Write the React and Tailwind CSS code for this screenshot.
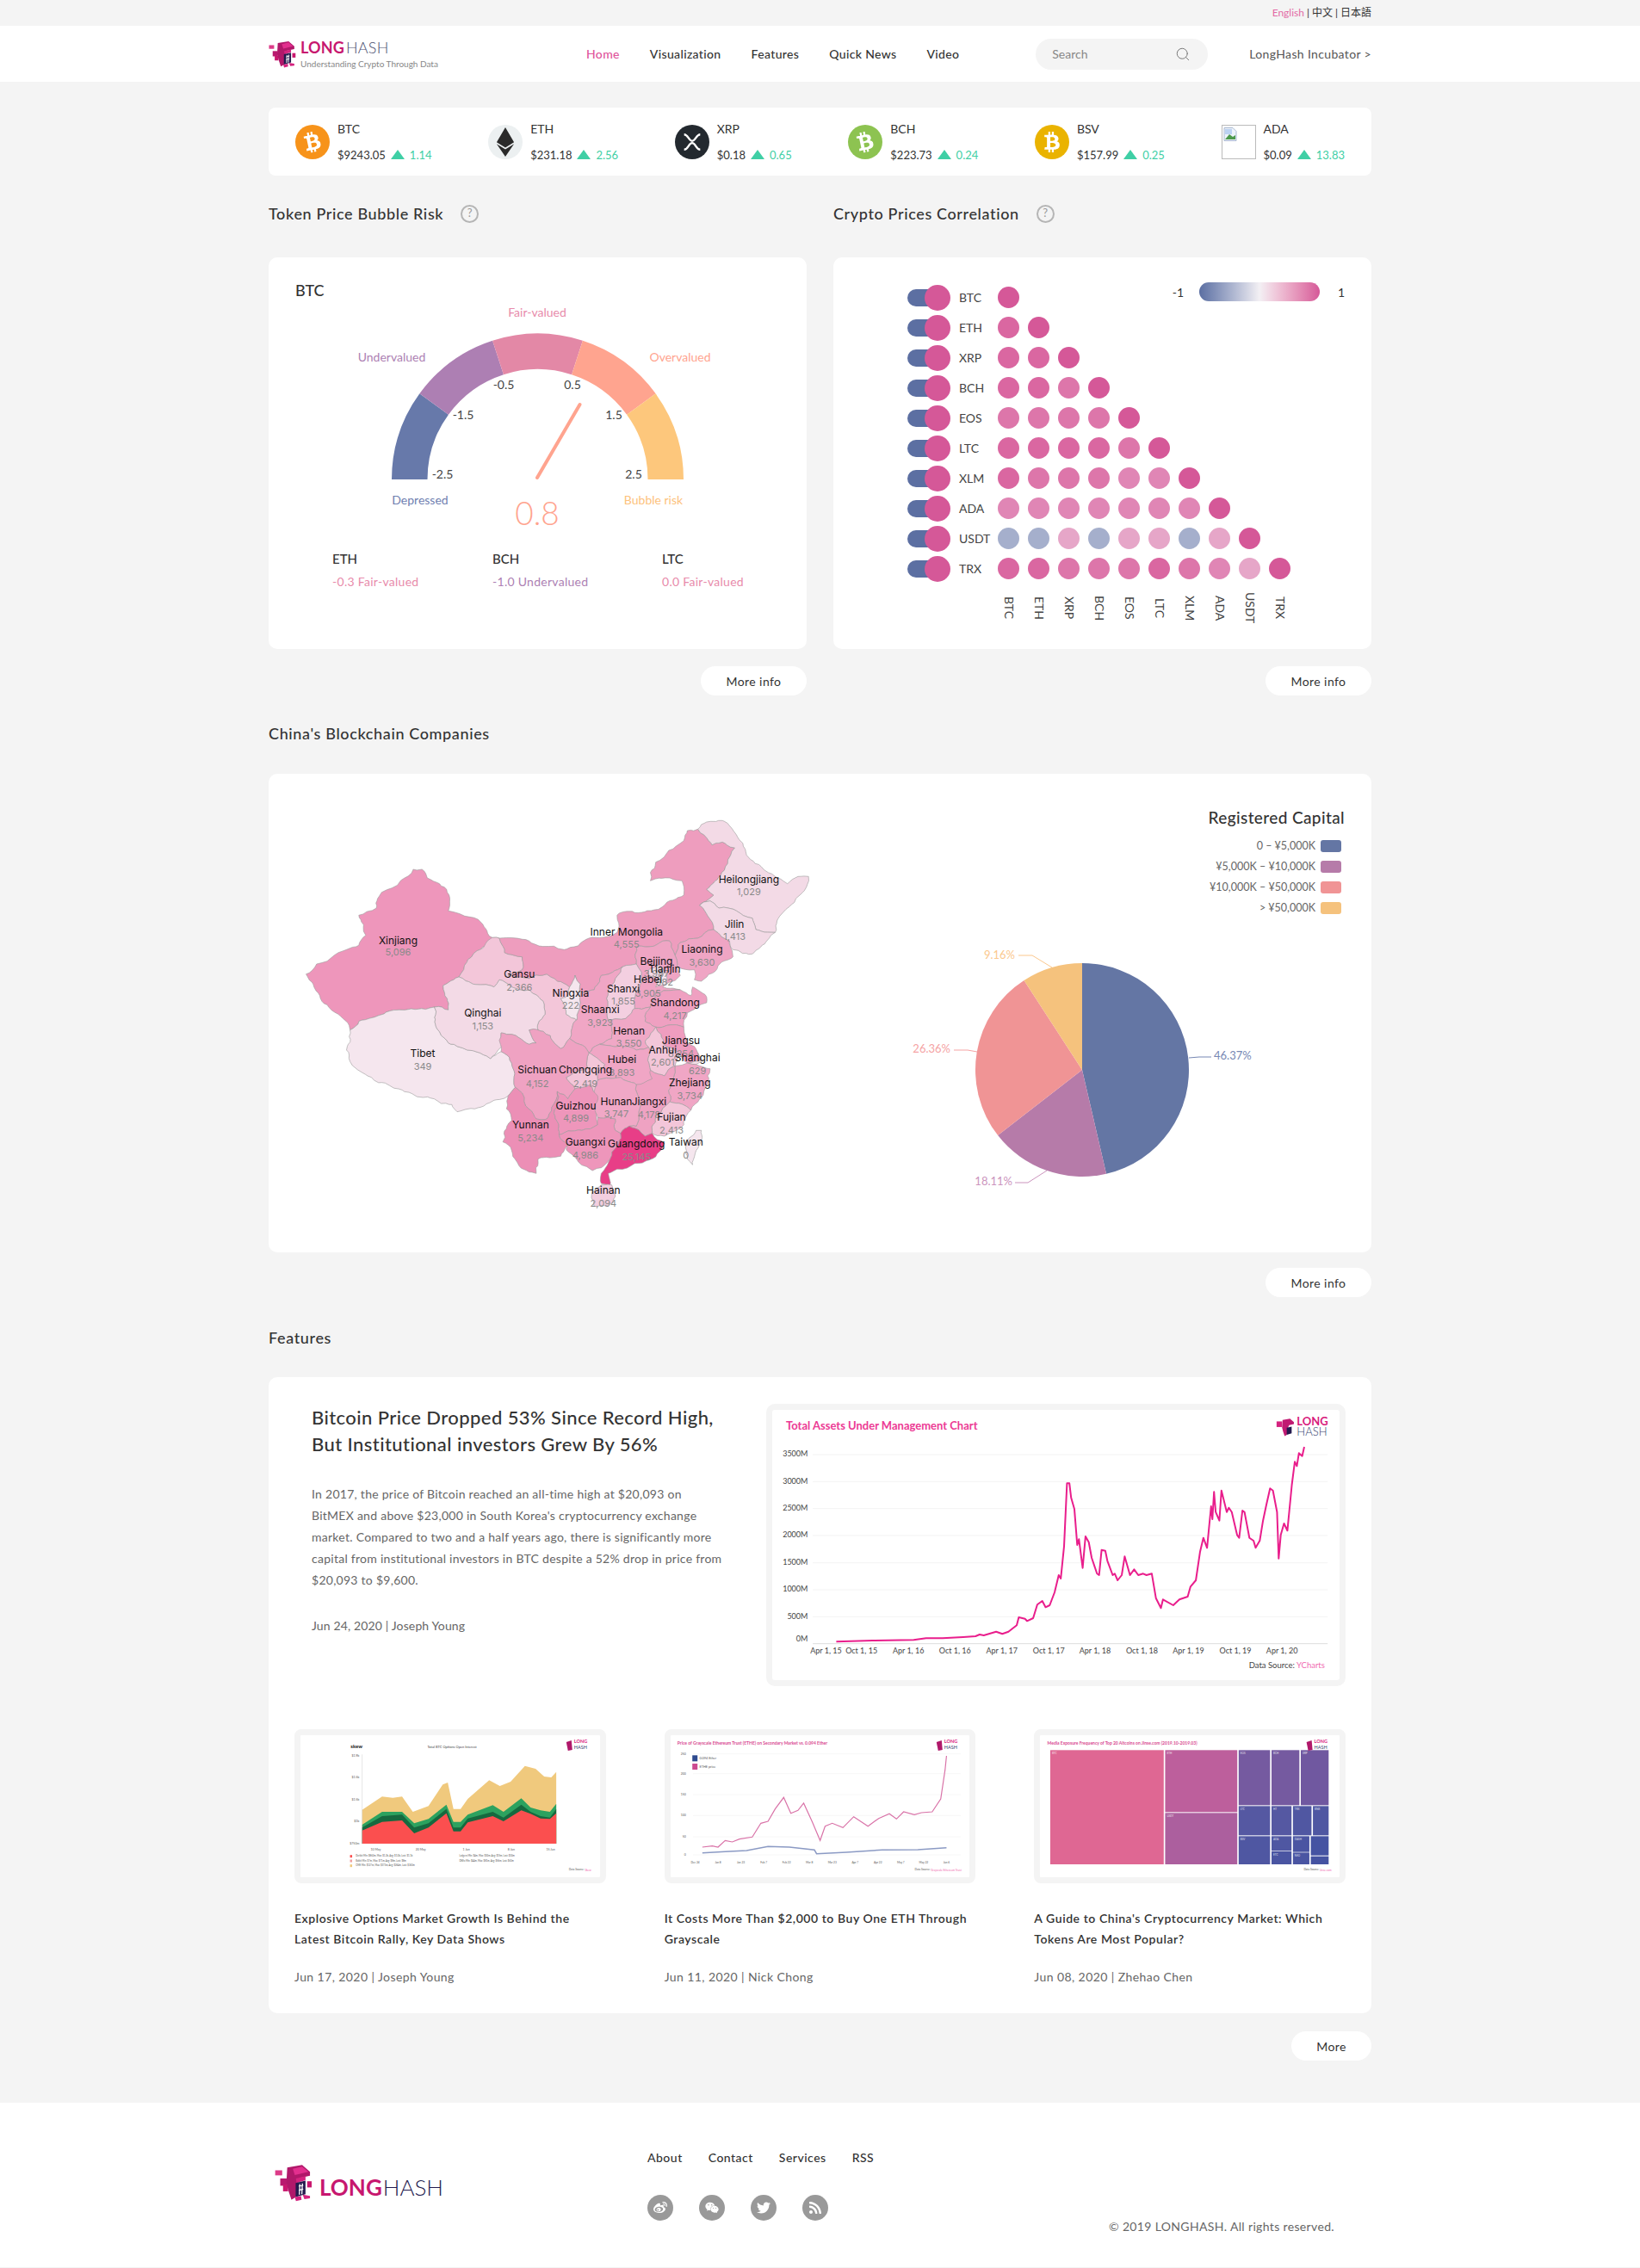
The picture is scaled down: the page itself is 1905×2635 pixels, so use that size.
import React from 'react';
import { FaBtc, FaEthereum, FaWeibo, FaWeixin, FaTwitter, FaRss } from 'react-icons/fa';
import { Search } from 'lucide-react';

const navLinks = ['Home', 'Visualization', 'Features', 'Quick News', 'Video'];

const coins = [
  { name: 'BTC', price: '$9243.05', change: '1.14', bg: 'bg-[#f7931a]', kind: 'btc' },
  { name: 'ETH', price: '$231.18', change: '2.56', bg: 'bg-[#ecf0f1]', kind: 'eth' },
  { name: 'XRP', price: '$0.18', change: '0.65', bg: 'bg-[#23292f]', kind: 'xrp' },
  { name: 'BCH', price: '$223.73', change: '0.24', bg: 'bg-[#8dc351]', kind: 'btc' },
  { name: 'BSV', price: '$157.99', change: '0.25', bg: 'bg-[#eab300]', kind: 'bsv' },
  { name: 'ADA', price: '$0.09', change: '13.83', bg: '', kind: 'broken' },
];

const tickers = ['BTC', 'ETH', 'XRP', 'BCH', 'EOS', 'LTC', 'XLM', 'ADA', 'USDT', 'TRX'];

const dotClass = {
  a: 'bg-[#d55898]',
  b: 'bg-[#da67a1]',
  c: 'bg-[#dd76aa]',
  d: 'bg-[#e086b5]',
  e: 'bg-[#e6a6c8]',
  f: 'bg-[#a5afcc]',
};

const matrix = ['a', 'ba', 'bba', 'bbca', 'cccca', 'bbbbca', 'bcccdda', 'ddddddda', 'ffefeefea', 'bbcccbcdea'];

const regions = [
  ['#ee96bb', '65,605 95,570 125,560 215,505 235,470 215,400 265,375 280,320 370,240 395,240 410,270 465,310 470,385 555,415 595,478 615,480 560,520 525,555 500,615 455,645 460,680 470,730 430,720 330,730 260,755 190,800 170,760 110,700 85,640'],
  ['#f5e6ee', '190,800 260,755 330,730 430,720 435,735 435,790 470,845 560,880 590,900 620,875 650,915 660,1000 640,1030 600,1045 545,1075 495,1085 480,1060 430,1040 345,1015 290,985 240,960 190,910 180,870'],
  ['#f3c6d9', '595,478 615,480 630,530 680,545 680,590 640,610 700,620 750,605 780,630 815,650 810,680 790,690 805,745 835,765 815,830 790,865 760,820 740,805 700,800 725,800 745,745 740,700 700,660 650,650 615,625 600,650 540,640 500,615 525,555 560,520'],
  ['#f3dae6', '455,645 500,615 540,640 600,650 615,625 650,650 700,660 740,700 745,745 725,800 700,800 720,845 700,850 650,815 620,810 620,860 590,900 560,880 470,845 435,790 435,735 430,720 470,730 460,680'],
  ['#ee9dbe', '615,480 700,490 800,520 870,480 950,460 950,400 1020,390 1080,370 1140,330 1135,280 1100,270 1045,280 1060,215 1140,140 1150,105 1180,100 1205,130 1220,155 1250,145 1285,165 1265,220 1245,260 1205,310 1225,330 1185,365 1205,395 1225,450 1180,480 1130,495 1115,540 1100,490 1080,490 1040,510 1005,510 1005,570 965,580 905,610 885,660 850,670 830,610 815,650 780,630 750,605 700,620 640,610 680,590 680,545 630,530'],
  ['#f3dae6', '1180,100 1205,75 1250,70 1290,120 1315,170 1360,230 1400,265 1435,290 1465,265 1495,265 1470,330 1430,380 1405,420 1400,460 1345,450 1335,410 1290,385 1240,375 1215,350 1185,365 1225,330 1205,310 1245,260 1265,220 1285,165 1250,145 1220,155 1205,130'],
  ['#f3dae6', '1185,365 1215,350 1240,375 1290,385 1335,410 1345,450 1400,460 1370,500 1335,535 1280,520 1270,490 1225,450 1205,395'],
  ['#efa5c4', '1225,450 1270,490 1280,545 1230,595 1190,630 1170,625 1170,590 1120,580 1115,540 1130,495 1180,480'],
  ['#efa5c4', '1005,510 1040,510 1080,490 1100,490 1115,540 1120,580 1130,610 1090,640 1080,650 1130,660 1060,670 1045,720 1000,725 1000,690 1020,600 1005,570'],
  ['#f3cfe0', '965,580 1005,570 1020,600 1000,690 1000,725 975,760 925,770 920,690 945,620'],
  ['#f0a6c5', '905,610 965,580 945,620 920,690 925,770 935,830 900,850 870,880 815,830 835,765 845,680 845,640 830,610 850,670 885,660'],
  ['#f5e6ee', '815,650 830,610 845,640 845,680 835,765 805,745 790,690 810,680'],
  ['#efa0c1', '1045,720 1060,670 1130,660 1160,680 1165,650 1205,685 1205,705 1150,740 1140,790 1060,790 1030,770'],
  ['#f0a8c6', '925,770 975,760 1000,725 1045,720 1030,770 1060,790 1030,840 1040,860 1005,870 900,850 935,830'],
  ['#ef9dbf', '1060,790 1140,790 1180,880 1190,905 1150,915 1125,880 1090,860 1075,815'],
  ['#f3c6d9', '1060,790 1075,815 1090,860 1125,880 1115,925 1085,960 1045,940 1040,860 1030,840'],
  ['#f5dfe9', '1180,880 1195,905 1175,920 1150,915 1190,905'],
  ['#f0a6c5', '1150,915 1175,920 1215,935 1210,980 1185,1040 1160,1080 1100,1050 1110,970 1115,925'],
  ['#f3c6d9', '1100,1050 1160,1080 1140,1130 1085,1170 1050,1160 1060,1100'],
  ['#efa2c2', '1045,940 1085,960 1115,925 1110,970 1100,1050 1060,1100 1050,1160 1030,1170 985,1135 1005,1135 1005,990'],
  ['#f0a6c5', '870,880 900,850 1005,870 1040,860 1045,940 1050,970 1005,990 960,965 895,975 915,920'],
  ['#f3c6d9', '870,880 915,920 895,975 895,1030 875,990 830,1005 805,965 865,930'],
  ['#f0a8c6', '895,975 960,965 1005,990 1005,1135 985,1135 960,1160 945,1150 945,1110 895,1105'],
  ['#efa2c2', '620,810 650,815 700,850 720,845 700,800 740,805 760,820 790,865 815,830 870,880 865,930 805,965 830,1005 810,1040 780,1015 750,1110 720,1110 680,1020 660,1000 650,915 620,875'],
  ['#ec8fb6', '640,1030 660,1000 680,1020 720,1110 750,1110 780,1015 770,1090 785,1165 810,1200 790,1240 725,1250 720,1300 700,1295 650,1220 625,1190 650,1115'],
  ['#ee96bb', '780,1015 810,1040 830,1005 875,990 895,1030 895,1130 850,1150 785,1165 770,1090'],
  ['#ee96bb', '785,1165 850,1150 895,1130 895,1105 945,1110 945,1150 960,1160 930,1250 905,1280 880,1290 840,1260 805,1215 810,1200'],
  ['#e83e87', '985,1135 1030,1170 1050,1160 1085,1195 1070,1225 1000,1265 950,1285 925,1300 930,1340 905,1335 905,1300 930,1250 960,1160'],
  ['#f3cfe0', '880,1365 905,1340 935,1340 945,1380 920,1415 885,1415'],
  ['#f5e6ee', '1175,1150 1190,1150 1175,1220 1165,1270 1150,1250 1145,1210'],
  ['#f3dae6', '1040,590 1070,575 1085,600 1060,620 1040,610'],
  ['#f5e6ee', '1075,610 1095,600 1090,640 1060,650'],
];

const provinces = [
  ['Xinjiang', '5,096', 327, 490, 532], ['Tibet', '349', 397, 885, 931], ['Qinghai', '1,153', 568, 744, 788],
  ['Gansu', '2,366', 672, 609, 653], ['Ningxia', '222', 818, 673, 716], ['Inner Mongolia', '4,555', 977, 462, 505],
  ['Heilongjiang', '1,029', 1325, 277, 322], ['Jilin', '1,413', 1284, 435, 478], ['Liaoning', '3,630', 1192, 522, 566],
  ['Beijing', '3,987', 1062, 562, 605], ['Tianjin', '982', 1085, 591, 637], ['Hebei', '3,905', 1038, 627, 674],
  ['Shanxi', '1,855', 968, 660, 703], ['Shandong', '4,217', 1115, 706, 752], ['Shaanxi', '3,923', 902, 732, 776],
  ['Henan', '3,550', 984, 805, 848], ['Jiangsu', '8,254', 1132, 840, 884], ['Anhui', '2,601', 1080, 873, 916],
  ['Shanghai', '629', 1179, 900, 946], ['Hubei', '3,893', 964, 906, 950], ['Sichuan', '4,152', 723, 942, 989],
  ['Chongqing', '2,419', 860, 942, 989], ['Zhejiang', '3,734', 1157, 985, 1031], ['Hunan', '3,747', 948, 1051, 1094],
  ['Jiangxi', '4,178', 1041, 1053, 1097], ['Guizhou', '4,899', 833, 1068, 1111], ['Fujian', '2,413', 1105, 1105, 1151],
  ['Yunnan', '5,234', 704, 1134, 1178], ['Guangxi', '4,986', 860, 1192, 1238], ['Guangdong', '25,145', 1005, 1200, 1246],
  ['Taiwan', '0', 1146, 1194, 1238], ['Hainan', '2,094', 911, 1362, 1406],
];

const aumLine = '212,892 300,888 400,886 430,880 470,880 520,876 550,873 560,867 570,870 600,857 615,865 630,857 650,835 655,807 670,812 675,820 690,810 700,763 712,750 720,772 730,765 742,720 752,660 757,672 765,560 772,340 778,340 782,390 790,430 797,555 801,535 810,635 817,525 825,545 832,600 845,655 850,660 856,572 865,575 870,610 883,660 888,655 895,678 905,660 912,595 925,660 935,640 945,660 957,655 965,660 978,655 988,740 1000,775 1005,745 1030,765 1045,745 1065,735 1072,700 1085,678 1095,580 1103,530 1112,565 1122,420 1125,465 1129,370 1133,440 1142,470 1147,365 1160,440 1165,425 1172,440 1185,520 1190,530 1198,435 1203,440 1215,530 1225,540 1230,565 1240,540 1248,470 1256,415 1265,358 1272,365 1282,440 1286,602 1291,520 1299,480 1307,505 1318,345 1325,265 1330,280 1335,235 1343,245 1348,213';

const articles = [
  { title: ['Explosive Options Market Growth Is Behind the', 'Latest Bitcoin Rally, Key Data Shows'], meta: 'Jun 17, 2020 | Joseph Young', chart: 'skew' },
  { title: ['It Costs More Than $2,000 to Buy One ETH Through', 'Grayscale'], meta: 'Jun 11, 2020 | Nick Chong', chart: 'ethe' },
  { title: ["A Guide to China's Cryptocurrency Market: Which", 'Tokens Are Most Popular?'], meta: 'Jun 08, 2020 | Zhehao Chen', chart: 'media' },
];

// scale "x,y x,y" strings read off a crop back to real pixels
const scalePts = (str, fx, fy) =>
  str.split(' ').map((p) => {
    const [x, y] = p.split(',').map(Number);
    return `${fx(x).toFixed(1)},${fy(y).toFixed(1)}`;
  }).join(' ');

// rough up a province border; the offset only depends on the midpoint so shared edges stay shared
const noise = (x, y, s) => {
  const v = Math.sin(x * 12.9898 + y * 78.233 + s) * 43758.5453;
  return v - Math.floor(v) - 0.5;
};

const splitEdge = (a, b, depth, out) => {
  const d = Math.hypot(a[0] - b[0], a[1] - b[1]);
  if (depth === 0 || d < 16) {
    out.push(b);
    return;
  }
  const mx = (a[0] + b[0]) / 2;
  const my = (a[1] + b[1]) / 2;
  const amp = d * 0.24;
  const m = [mx + noise(mx, my, 1) * amp, my + noise(mx, my, 2) * amp];
  splitEdge(a, m, depth - 1, out);
  splitEdge(m, b, depth - 1, out);
};

const roughen = (str) => {
  const pts = str.split(' ').map((p) => p.split(',').map(Number));
  const out = [];
  pts.forEach((p, i) => splitEdge(p, pts[(i + 1) % pts.length], 3, out));
  return out.map((p) => p.join(',')).join(' ');
};

const polar = (cx, cy, r, deg) => {
  const a = (deg * Math.PI) / 180;
  return [cx - r * Math.cos(a), cy - r * Math.sin(a)];
};

const arcPath = (a0, a1, r0, r1) => {
  const [x0, y0] = polar(625.5, 556, r1, a0);
  const [x1, y1] = polar(625.5, 556, r1, a1);
  const [x2, y2] = polar(625.5, 556, r0, a1);
  const [x3, y3] = polar(625.5, 556, r0, a0);
  return `M${x0} ${y0}A${r1} ${r1} 0 0 1 ${x1} ${y1}L${x2} ${y2}A${r0} ${r0} 0 0 0 ${x3} ${y3}Z`;
};

const piePath = (from, to) => {
  const cx = 1258;
  const cy = 1243;
  const r = 124;
  const p = (v) => {
    const a = (v / 100) * 2 * Math.PI;
    return [cx + r * Math.sin(a), cy - r * Math.cos(a)];
  };
  const [x0, y0] = p(from);
  const [x1, y1] = p(to);
  return `M${cx} ${cy}L${x0} ${y0}A${r} ${r} 0 ${to - from > 50 ? 1 : 0} 1 ${x1} ${y1}Z`;
};

function Creature({ className }) {
  return (
    <svg viewBox="40 32 135 135" className={className}>
      <rect x="42" y="55" width="25" height="18" fill="#dc3b88" />
      <rect x="60" y="84" width="24" height="26" fill="#b81a6f" />
      <rect x="70" y="106" width="18" height="24" fill="#c9186f" />
      <polygon points="85,45 138,36 166,60 166,74 132,82 122,104 116,150 100,160 90,130 82,100" fill="#b0186a" />
      <polygon points="105,50 138,42 160,60 112,72" fill="#e22f8e" />
      <polygon points="116,84 150,76 150,90 118,100" fill="#d4237f" />
      <polygon points="115,100 150,92 150,140 115,150" fill="#241a4e" />
      <path d="M126 112L142 108M126 126L142 122M130 104L128 142M139 102L137 140" stroke="#fff" strokeWidth="4" fill="none" />
      <rect x="156" y="94" width="16" height="22" fill="#c9186f" />
      <polygon points="112,150 134,146 136,160 116,165" fill="#d4237f" />
      <polygon points="140,142 166,146 166,155 146,158" fill="#d4237f" />
    </svg>
  );
}

function CoinIcon({ coin }) {
  if (coin.kind === 'broken') {
    return (
      <div className="w-10 h-10 border border-[#bbb] shrink-0 pl-[1px] pt-[2px]">
        <svg viewBox="0 0 16 16" className="w-4 h-4 block">
          <path d="M1 .5h10l4 4v11H1z" fill="#eef3fb" stroke="#a8b8d0" />
          <path d="M2 2h8v6H2z" fill="#bcd2f2" />
          <path d="M2 14l5-6 4 3 3-2v5z" fill="#4d9a4d" />
        </svg>
      </div>
    );
  }
  return (
    <div className={`w-10 h-10 rounded-full shrink-0 flex items-center justify-center ${coin.bg}`}>
      {coin.kind === 'btc' && <FaBtc size={24} className="text-white rotate-[-12deg]" />}
      {coin.kind === 'bsv' && <FaBtc size={24} className="text-white" />}
      {coin.kind === 'eth' && <FaEthereum size={34} className="text-[#2a2a2a]" />}
      {coin.kind === 'xrp' && (
        <svg viewBox="0 0 24 24" className="w-7 h-7" fill="none" stroke="#fff" strokeWidth="2">
          <path d="M4 4.500c4 0 4.500 6.500 8 6.500s4-6.500 8-6.500M4 19.500c4 0 4.500-6.500 8-6.500s4 6.500 8 6.500" />
        </svg>
      )}
    </div>
  );
}

function SectionTitle({ children, help }) {
  return (
    <div className="flex items-center h-5">
      <h2 className="text-[18px] font-medium text-[#333] tracking-[0.035em]">{children}</h2>
      {help && (
        <span className="ml-[20px] w-[21px] h-[21px] rounded-full border-2 border-[#b5b5b5] text-[#999] text-[13px] flex items-center justify-center">?</span>
      )}
    </div>
  );
}

function MoreButton({ children, className }) {
  return (
    <div className="flex justify-end">
      <button className={`h-[34px] bg-white rounded-full text-[14px] text-[#333] tracking-[0.03em] ${className}`}>{children}</button>
    </div>
  );
}

function Gauge() {
  const segs = [
    [0, 36, '#6779aa'],
    [36, 72, '#ad7fb3'],
    [72, 108, '#e388a6'],
    [108, 144, '#ffa48f'],
    [144, 180, '#fdc77c'],
  ];
  const ticks = [['-2.5', 515, 551], ['-1.5', 539, 482], ['-0.5', 586, 447], ['0.5', 666, 447], ['1.5', 714, 482], ['2.5', 737, 551]];
  const names = [
    ['Fair-valued', 625, 363, '#e88bab'],
    ['Undervalued', 456, 415, '#ad7fb3'],
    ['Overvalued', 791, 415, '#ffa48f'],
    ['Depressed', 489, 581, '#6f80b0'],
    ['Bubble risk', 760, 581, '#fdc27c'],
  ];
  return (
    <svg viewBox="313 350 625 270" className="w-[625px] h-[270px] block">
      {segs.map(([a, b, c]) => <path key={a} d={arcPath(a, b, 128, 169.5)} fill={c} />)}
      <line x1="625" y1="554" x2="674.500" y2="469" stroke="#ffa48f" strokeWidth="4" strokeLinecap="round" />
      {ticks.map(([t, x, y]) => <text key={t} x={x} y={y} textAnchor="middle" dominantBaseline="middle" fontSize="14" fill="#444">{t}</text>)}
      {names.map(([t, x, y, c]) => <text key={t} x={x} y={y} textAnchor="middle" dominantBaseline="middle" fontSize="14" fill={c}>{t}</text>)}
      <text x="625" y="600" textAnchor="middle" dominantBaseline="middle" fontSize="37" fontWeight="300" fill="#ffa48f">0.8</text>
    </svg>
  );
}

function Correlation() {
  return (
    <div className="relative pt-[29px]">
      <div className="absolute left-[380px] top-[29px] flex items-center text-[14px] text-[#333]">
        <span className="w-[45px] pr-[4px] text-center">-1</span>
        <div className="w-[140px] h-[22px] rounded-full bg-gradient-to-r from-[#5c6fa2] via-[#f3f0f4] to-[#d55898]" />
        <span className="w-[50px] text-center">1</span>
      </div>
      {tickers.map((t, i) => (
        <div key={t} className="flex items-center h-[35px] pl-[86px]">
          <div className="relative w-[50px] h-[30px] flex items-center">
            <div className="w-[40px] h-[20px] rounded-full bg-[#5c6fa2]" />
            <div className="absolute right-0 top-0 w-[30px] h-[30px] rounded-full bg-[#d55898]" />
          </div>
          <span className="ml-[10px] w-[45px] text-[14px] text-[#444] whitespace-nowrap">{t}</span>
          <div className="flex gap-[10px]">
            {matrix[i].split('').map((k, j) => <div key={j} className={`w-[25px] h-[25px] rounded-full ${dotClass[k]}`} />)}
          </div>
        </div>
      ))}
      <div className="flex gap-[10px] pl-[190px] mt-[10px]">
        {tickers.map((t) => (
          <span key={t} className="w-[25px] flex justify-center text-[14px] text-[#444] [writing-mode:vertical-rl]">{t}</span>
        ))}
      </div>
    </div>
  );
}

function ChinaMap() {
  const fx = (x) => x / 2.45;
  const fy = (y) => y / 3;
  return (
    <svg viewBox="0 0 640 500" className="w-[640px] h-[500px] block shrink-0 font-['Inter',sans-serif]">
      {regions.map(([c, p], i) => (
        <polygon key={i} points={scalePts(roughen(p), fx, fy)} fill={c} stroke="#9a9a9a" strokeWidth="0.6" strokeLinejoin="round" />
      ))}
      {provinces.map(([n, v, x, y, vy]) => (
        <g key={n} textAnchor="middle" dominantBaseline="middle">
          <text x={fx(x)} y={fy(y)} fontSize="12" fill="#111">{n}</text>
          <text x={fx(x)} y={fy(vy)} fontSize="11" fill="#8a8a8a">{v}</text>
        </g>
      ))}
    </svg>
  );
}

function Pie() {
  const slices = [
    [0, 46.37, '#6476a4'],
    [46.37, 64.48, '#b67ba9'],
    [64.48, 90.84, '#f09495'],
    [90.84, 100, '#f5c27d'],
  ];
  const labels = [
    ['9.16%', 1180, 1111, 'end', '#fbc88d', '1184,1110 1200,1110 1223,1124'],
    ['26.36%', 1105, 1220, 'end', '#f5a3a4', '1109,1220 1125,1220 1136,1222'],
    ['46.37%', 1411, 1228, 'start', '#7788b4', '1408,1228 1394,1228 1382,1229'],
    ['18.11%', 1177, 1374, 'end', '#cb94bd', '1180,1374 1195,1374 1217,1360'],
  ];
  return (
    <svg viewBox="970 1095 623 300" className="w-[623px] h-[300px] block">
      {slices.map(([a, b, c]) => <path key={a} d={piePath(a, b)} fill={c} />)}
      {labels.map(([t, x, y, anchor, c, line]) => (
        <g key={t}>
          <polyline points={line} fill="none" stroke={c} strokeWidth="1" />
          <text x={x} y={y} textAnchor={anchor} dominantBaseline="middle" fontSize="13" fill={c}>{t}</text>
        </g>
      ))}
    </svg>
  );
}

function AumChart() {
  const fx = (x) => 870 + x / 2.09;
  const fy = (y) => 1610 + y / 3;
  const ys = [['3500M', 240], ['3000M', 334], ['2500M', 428], ['2000M', 522], ['1500M', 617], ['1000M', 711], ['500M', 805], ['0M', 883]];
  const xs = [['Apr 1, 15', 187], ['Oct 1, 15', 273], ['Apr 1, 16', 387], ['Oct 1, 16', 500], ['Apr 1, 17', 614], ['Oct 1, 17', 728], ['Apr 1, 18', 840], ['Oct 1, 18', 954], ['Apr 1, 19', 1067], ['Oct 1, 19', 1181], ['Apr 1, 20', 1294]];
  return (
    <svg viewBox="897 1638 659 314" className="w-full h-full block">
      <text x={fx(90)} y={fy(143)} dominantBaseline="middle" fontSize="13" fontWeight="700" fill="#ec3a94">Total Assets Under Management Chart</text>
      {ys.map(([t, y]) => (
        <g key={t}>
          <line x1={fx(155)} x2={fx(1405)} y1={fy(t === '0M' ? 899 : y)} y2={fy(t === '0M' ? 899 : y)} stroke={t === '0M' ? '#ddd' : '#f3f3f3'} />
          <text x={fx(143)} y={fy(y)} textAnchor="end" dominantBaseline="middle" fontSize="9" fill="#444">{t}</text>
        </g>
      ))}
      {xs.map(([t, x]) => <text key={t} x={fx(x)} y={fy(927)} textAnchor="middle" dominantBaseline="middle" fontSize="9" fill="#444">{t}</text>)}
      <polyline points={scalePts(aumLine, fx, fy)} fill="none" stroke="#e91e8c" strokeWidth="2" strokeLinejoin="round" />
      <text x={fx(1398)} y={fy(977)} textAnchor="end" dominantBaseline="middle" fontSize="9.500" fill="#444">Data Source: <tspan fill="#f06ab0">YCharts</tspan></text>
      <svg x={fx(1280)} y={fy(113)} width="22" height="22" viewBox="40 32 135 135">
        <polygon points="85,45 138,36 166,60 166,74 132,82 122,104 116,150 100,160 90,130 82,100" fill="#c01a72" />
        <rect x="42" y="55" width="40" height="40" fill="#d4237f" />
        <polygon points="115,100 150,92 150,140 115,150" fill="#241a4e" />
      </svg>
      <text x={fx(1330)} y={fy(129)} dominantBaseline="middle" fontSize="13" fontWeight="700" fill="#d81b7d">LONG</text>
      <text x={fx(1330)} y={fy(165)} dominantBaseline="middle" fontSize="13" fontWeight="300" fill="#33406e">HASH</text>
    </svg>
  );
}

function ThumbLogo({ x }) {
  return (
    <g>
      <polygon points={`${x},8 ${x + 6},6 ${x + 7},17 ${x + 2},18`} fill="#b0186a" />
      <text x={x + 9} y={9} fontSize="5.500" fontWeight="700" fill="#d81b7d">LONG</text>
      <text x={x + 9} y={16} fontSize="5.500" fill="#33406e">HASH</text>
    </g>
  );
}

function SkewChart() {
  const fx = (x) => (x - 36) / 1.206;
  const fy = (y) => (y - 78) / 3;
  const area = (line, fill) => <polygon points={scalePts(`${line} 394,456 122,456`, fx, fy)} fill={fill} />;
  return (
    <svg viewBox="0 0 347 165" className="w-full h-full block">
      <text x={fx(106)} y={fy(119)} fontSize="6" fontWeight="700" fill="#111" dominantBaseline="middle">skew</text>
      <text x={fx(248)} y={fy(119)} fontSize="4" textAnchor="middle" fill="#444" dominantBaseline="middle">Total BTC Options Open Interest</text>
      {area('122,338 150,292 165,296 178,292 193,345 215,325 235,250 242,243 250,335 260,335 270,300 300,235 315,255 330,240 350,185 365,195 377,222 387,225 394,206', '#f0c97d')}
      {area('122,390 150,345 178,345 195,385 215,370 240,320 250,380 260,380 270,355 305,322 320,345 345,298 358,330 372,340 385,345 394,317', '#2ca25f')}
      {area('122,400 150,360 178,355 195,400 215,385 240,335 250,400 260,400 270,368 305,345 320,365 345,320 358,345 372,360 385,365 394,335', '#16693f')}
      {area('122,410 150,380 178,375 195,420 215,400 240,350 250,413 260,413 270,382 305,360 320,378 345,340 358,352 372,368 385,370 394,350', '#fb4f4f')}
      <line x1={fx(122)} x2={fx(122)} y1={fy(145)} y2={fy(456)} stroke="#ccc" strokeWidth="0.5" />
      {[['$1.9b', 149], ['$1.5b', 226], ['$1.5b', 302], ['$1b', 378], ['$750m', 455]].map(([t, y], i) => (
        <text key={i} x={fx(118)} y={fy(y)} fontSize="3.500" textAnchor="end" fill="#555" dominantBaseline="middle">{t}</text>
      ))}
      {[['10 May', 141], ['20 May', 204], ['1 Jun', 268], ['8 Jun', 331], ['15 Jun', 386]].map(([t, x]) => (
        <text key={t} x={fx(x)} y={fy(476)} fontSize="3.500" textAnchor="middle" fill="#555" dominantBaseline="middle">{t}</text>
      ))}
      {[[500, '#fb4f4f', 'Deribit Min: $862m, Max: $1.2b, Avg: $1.0b, Last: $1.1b', 'Ledgerx Min: $4m, Max: $30m, Avg: $15m, Last: $30m'], [516, '#f0a0a0', 'Bakkt Min: $7m, Max: $71m, Avg: $8m, Last: $8m', 'OKEx Min: $44m, Max: $81m, Avg: $56m, Last: $63m'], [533, '#f0c97d', 'CME Min: $127m, Max: $373m, Avg: $264m, Last: $363m', '']].map(([y, c, a, b]) => (
        <g key={y}>
          <rect x={fx(105)} y={fy(y) - 1.500} width="2.500" height="3" fill={c} />
          <text x={fx(113)} y={fy(y)} fontSize="2.700" fill="#555" dominantBaseline="middle">{a}</text>
          <text x={fx(258)} y={fy(y)} fontSize="2.700" fill="#555" dominantBaseline="middle">{b}</text>
        </g>
      ))}
      <text x={fx(443)} y={fy(548)} fontSize="3.200" textAnchor="end" fill="#555" dominantBaseline="middle">Data Source: <tspan fill="#f06ab0">Skew</tspan></text>
      <ThumbLogo x={fx(408)} />
    </svg>
  );
}

function EtheChart() {
  const fx = (x) => (x - 554) / 1.206;
  const fy = (y) => (y - 78) / 3;
  const pink = '598,468 612,464 620,468 630,445 640,450 650,440 668,433 680,385 690,378 700,335 712,295 722,350 732,340 740,315 752,380 763,445 770,395 780,385 795,400 810,362 830,395 845,368 860,352 870,370 880,345 895,355 905,348 920,345 932,300 938,200 940,150';
  const blue = '598,488 630,484 660,480 690,466 720,468 755,478 758,491 800,486 850,478 900,477 940,470';
  return (
    <svg viewBox="0 0 347 165" className="w-full h-full block">
      <text x={fx(563)} y={fy(108)} fontSize="5" fontWeight="700" fill="#d8478f" dominantBaseline="middle">Price of Grayscale Ethereum Trust (ETHE) on Secondary Market vs. 0.094 Ether</text>
      {[[143, '250'], [212, '200'], [285, '150'], [358, '100'], [432, '50'], [495, '0']].map(([y, t]) => (
        <g key={t}>
          <line x1={fx(585)} x2={fx(960)} y1={fy(y)} y2={fy(y)} stroke="#f2f2f2" strokeWidth="0.6" />
          <text x={fx(575)} y={fy(y)} fontSize="3.500" textAnchor="end" fill="#555" dominantBaseline="middle">{t}</text>
        </g>
      ))}
      <rect x={fx(584)} y={fy(148)} width="6" height="7" fill="#2e4a8e" />
      <text x={fx(594)} y={fy(159)} fontSize="3.800" fill="#555" dominantBaseline="middle">0.094 Ether</text>
      <rect x={fx(584)} y={fy(177)} width="6" height="7" fill="#cc4a90" />
      <text x={fx(594)} y={fy(188)} fontSize="3.800" fill="#555" dominantBaseline="middle">ETHE price</text>
      <polyline points={scalePts(pink, fx, fy)} fill="none" stroke="#d973a8" strokeWidth="1.200" />
      <polyline points={scalePts(blue, fx, fy)} fill="none" stroke="#8b9ac4" strokeWidth="1.500" />
      {['Dec 24', 'Jan 8', 'Jan 23', 'Feb 7', 'Feb 22', 'Mar 8', 'Mar 23', 'Apr 7', 'Apr 22', 'May 7', 'May 22', 'Jun 6'].map((t, i) => (
        <text key={t} x={fx(588 + i * 32)} y={fy(523)} fontSize="3.200" textAnchor="middle" fill="#555" dominantBaseline="middle">{t}</text>
      ))}
      <text x={fx(961)} y={fy(548)} fontSize="3.200" textAnchor="end" fill="#555" dominantBaseline="middle">Data Source: <tspan fill="#f06ab0">Grayscale Ethereum Trust</tspan></text>
      <ThumbLogo x={fx(926)} />
    </svg>
  );
}

function MediaChart() {
  const fx = (x) => (x - 1072) / 1.206;
  const fy = (y) => (y - 78) / 3;
  const cells = [
    [1086, 130, 1245, 528, '#df6793', 'BTC'],
    [1247, 130, 1348, 346, '#bd5f9c', 'ETH'],
    [1247, 349, 1348, 528, '#ac5f9e', 'USDT'],
    [1350, 130, 1394, 322, '#755aa0', 'EOS'],
    [1396, 130, 1435, 322, '#755aa0', 'BCH'],
    [1437, 130, 1476, 322, '#7058a0', 'XRP'],
    [1350, 325, 1394, 427, '#5558a2', 'LTC'],
    [1396, 325, 1424, 427, '#5558a2', 'HT'],
    [1426, 325, 1452, 427, '#5057a2', 'TRX'],
    [1454, 325, 1476, 427, '#4f57a2', 'BNB'],
    [1350, 430, 1394, 528, '#4f57a2', 'BSV'],
    [1396, 430, 1424, 480, '#4f57a2', 'ADA'],
    [1396, 482, 1424, 528, '#4a55a2', 'ETC'],
    [1426, 430, 1449, 485, '#4a55a2', 'DASH'],
    [1426, 487, 1449, 528, '#4a55a2', 'NEO'],
    [1451, 430, 1476, 497, '#4553a2', ''],
    [1451, 500, 1476, 528, '#4553a2', ''],
  ];
  return (
    <svg viewBox="0 0 347 165" className="w-full h-full block">
      <text x={fx(1082)} y={fy(108)} fontSize="5" fontWeight="700" fill="#d8478f" dominantBaseline="middle">Media Exposure Frequency of Top 20 Altcoins on Jinse.com (2019.10-2019.03)</text>
      {cells.map(([x0, y0, x1, y1, c, t], i) => (
        <g key={i}>
          <rect x={fx(x0)} y={fy(y0)} width={fx(x1) - fx(x0)} height={fy(y1) - fy(y0)} fill={c} />
          {t && <text x={fx(x0) + 2} y={fy(y0) + 5} fontSize="3" fill="#fff" opacity="0.8">{t}</text>}
        </g>
      ))}
      <text x={fx(1480)} y={fy(548)} fontSize="3.200" textAnchor="end" fill="#555" dominantBaseline="middle">Data Source: <tspan fill="#f06ab0">Jinse.com</tspan></text>
      <ThumbLogo x={fx(1445)} />
    </svg>
  );
}

const thumbs = { skew: SkewChart, ethe: EtheChart, media: MediaChart };

export default function App() {
  return (
    <div className="min-h-[2635px] bg-[#f4f4f4] font-['Lato','Noto_Sans_CJK_SC',sans-serif] text-[#333]">
      {/* top language bar */}
      <div className="h-[30px] w-[1281px] mx-auto flex items-center justify-end text-[12px] text-[#333]">
        <span className="text-[#e36ba5]">English</span>
        <span className="mx-[3px]">|</span>
        <span>中文</span>
        <span className="mx-[3px]">|</span>
        <span>日本語</span>
      </div>

      {/* header */}
      <header className="h-[65px] bg-white">
        <div className="w-[1281px] mx-auto h-full flex items-center relative">
          <Creature className="w-[32px] h-[34px] shrink-0" />
          <div className="ml-[5px] w-[332px]">
            <div className="text-[18px] leading-[20px] tracking-[0.01em]">
              <span className="font-bold text-[#c7176f]">LONG</span>
              <span className="font-light text-[#4a4f70] ml-[2px]">HASH</span>
            </div>
            <div className="text-[10px] leading-[13px] mt-[3px] text-[#888]">Understanding Crypto Through Data</div>
          </div>
          <nav className="flex gap-[35px] text-[14px] font-medium tracking-[0.025em]">
            {navLinks.map((l, i) => (
              <a key={l} className={i === 0 ? 'text-[#e0559b]' : 'text-[#333]'}>{l}</a>
            ))}
          </nav>
          <div className="ml-auto w-[200px] h-[36px] rounded-full bg-[#f4f4f4] flex items-center pl-[19px] pr-[20px] justify-between">
            <span className="text-[14px] text-[#888]">Search</span>
            <Search size={18} strokeWidth={1.300} className="text-[#777]" />
          </div>
          <a className="ml-[48px] text-[14px] text-[#555] tracking-[0.025em]">LongHash Incubator &gt;</a>
        </div>
      </header>

      <main className="w-[1281px] mx-auto">
        {/* ticker */}
        <div className="mt-[30px] h-[79px] bg-white rounded-[8px] px-[31px] flex items-center justify-between">
          {coins.map((c) => (
            <div key={c.name} className="flex items-center">
              <CoinIcon coin={c} />
              <div className="ml-[9px]">
                <div className="text-[14px] leading-[16px] text-[#333]">{c.name}</div>
                <div className="mt-[14px] flex items-center text-[13px] leading-[16px]">
                  <span className="text-[#333]">{c.price}</span>
                  <span className="ml-[6px] w-0 h-0 border-x-[8px] border-x-transparent border-b-[11px] border-b-[#3fcfa5]" />
                  <span className="ml-[6px] text-[#3fcfa5]">{c.change}</span>
                </div>
              </div>
            </div>
          ))}
        </div>

        {/* bubble risk + correlation */}
        <div className="mt-[34px] grid grid-cols-[625px_625px] gap-x-[31px]">
          <SectionTitle help>Token Price Bubble Risk</SectionTitle>
          <SectionTitle help>Crypto Prices Correlation</SectionTitle>

          <div className="mt-[41px] h-[455px] bg-white rounded-[10px] relative">
            <h3 className="absolute left-[31px] top-[25px] text-[18px] font-medium text-[#333]">BTC</h3>
            <div className="pt-[52px]">
              <Gauge />
            </div>
            <div className="flex mt-[18px] pl-[74px] text-[14px]">
              {[
                ['ETH', '-0.3 Fair-valued', 'w-[186px]', 'text-[#e88bab]'],
                ['BCH', '-1.0 Undervalued', 'w-[197px]', 'text-[#ad7fb3]'],
                ['LTC', '0.0 Fair-valued', 'w-[140px]', 'text-[#e88bab]'],
              ].map(([n, v, w, c]) => (
                <div key={n} className={w}>
                  <div className="text-[15px] font-medium text-[#333] leading-[20px]">{n}</div>
                  <div className={`mt-[7px] leading-[20px] tracking-[0.02em] ${c}`}>{v}</div>
                </div>
              ))}
            </div>
          </div>
          <div className="mt-[41px] h-[455px] bg-white rounded-[10px]">
            <Correlation />
          </div>

          <div className="mt-[20px]"><MoreButton className="w-[123px]">More info</MoreButton></div>
          <div className="mt-[20px]"><MoreButton className="w-[123px]">More info</MoreButton></div>
        </div>

        {/* china map */}
        <div className="mt-[34px]">
          <SectionTitle>China's Blockchain Companies</SectionTitle>
        </div>
        <div className="mt-[37px] h-[556px] bg-white rounded-[10px] flex pt-[31px] pl-[17px]">
          <ChinaMap />
          <div className="flex-1 -mt-[31px] pt-[39px]">
            <div className="flex flex-col items-end pr-[31px]">
              <h3 className="text-[19px] leading-[24px] font-medium text-[#333] tracking-[0.02em]">Registered Capital</h3>
              <div className="mt-[14px] mr-[4px] flex flex-col gap-[10px]">
                {[
                  ['0 – ¥5,000K', 'bg-[#6476a4]'],
                  ['¥5,000K – ¥10,000K', 'bg-[#b67ba9]'],
                  ['¥10,000K – ¥50,000K', 'bg-[#f09495]'],
                  ['> ¥50,000K', 'bg-[#f5c27d]'],
                ].map(([t, c]) => (
                  <div key={t} className="flex items-center justify-end gap-[6px] h-[14px] text-[12.5px] text-[#666]">
                    <span>{t}</span>
                    <span className={`w-[24px] h-[14px] rounded-[3px] ${c}`} />
                  </div>
                ))}
              </div>
            </div>
            <div className="mt-[33px]">
              <Pie />
            </div>
          </div>
        </div>
        <div className="mt-[18px]"><MoreButton className="w-[123px]">More info</MoreButton></div>

        {/* features */}
        <div className="mt-[37px]">
          <SectionTitle>Features</SectionTitle>
        </div>
        <div className="mt-[36px] h-[739px] bg-white rounded-[10px] pt-[31px] px-[30px]">
          <div className="flex">
            <div className="ml-[20px] w-[528px] shrink-0">
              <h3 className="text-[22px] leading-[31px] font-medium text-[#333] tracking-[0.019em] whitespace-nowrap">
                Bitcoin Price Dropped 53% Since Record High,<br />But Institutional investors Grew By 56%
              </h3>
              <p className="mt-[30px] text-[14px] leading-[25px] text-[#666] tracking-[0.019em] whitespace-nowrap">
                In 2017, the price of Bitcoin reached an all-time high at $20,093 on<br />
                BitMEX and above $23,000 in South Korea's cryptocurrency exchange<br />
                market. Compared to two and a half years ago, there is significantly more<br />
                capital from institutional investors in BTC despite a 52% drop in price from<br />
                $20,093 to $9,600.
              </p>
              <div className="mt-[31px] text-[14px] leading-[20px] text-[#666] tracking-[0.01em]">Jun 24, 2020 | Joseph Young</div>
            </div>
            <div className="w-[673px] h-[328px] border-[7px] border-[#f4f4f4] rounded-[10px] overflow-hidden">
              <AumChart />
            </div>
          </div>

          <div className="mt-[50px] grid grid-cols-3 gap-x-[68px]">
            {articles.map((a) => {
              const Chart = thumbs[a.chart];
              return (
                <article key={a.chart}>
                  <div className="h-[179px] border-[7px] border-[#f4f4f4] rounded-[8px] overflow-hidden">
                    <Chart />
                  </div>
                  <h4 className="mt-[29px] text-[14px] leading-[24px] font-semibold text-[#333] tracking-[0.04em] whitespace-nowrap">
                    {a.title[0]}<br />{a.title[1]}
                  </h4>
                  <div className="mt-[22px] text-[14px] leading-[20px] text-[#666] tracking-[0.03em]">{a.meta}</div>
                </article>
              );
            })}
          </div>
        </div>
        <div className="mt-[21px]"><MoreButton className="w-[93px]">More</MoreButton></div>
      </main>

      {/* footer */}
      <footer className="mt-[49px] h-[191px] bg-white">
        <div className="w-[1281px] mx-auto flex relative">
          <div className="w-[440px] pl-[7px] pt-[70px] flex items-center shrink-0 self-start">
            <Creature className="w-[44px] h-[46px] shrink-0" />
            <div className="ml-[8px] text-[26px] leading-[30px] mt-[10px]">
              <span className="font-bold text-[#c7176f]">LONG</span>
              <span className="font-light text-[#241a4e] ml-[1px]">HASH</span>
            </div>
          </div>
          <div className="pt-[54px]">
            <div className="flex gap-[30px] text-[14px] leading-[20px] font-medium text-[#333] tracking-[0.035em]">
              <a>About</a><a>Contact</a><a>Services</a><a>RSS</a>
            </div>
            <div className="mt-[33px] flex gap-[30px]">
              {[FaWeibo, FaWeixin, FaTwitter, FaRss].map((Icon, i) => (
                <span key={i} className="w-[30px] h-[30px] rounded-full bg-[#999] flex items-center justify-center text-white">
                  <Icon size={16} />
                </span>
              ))}
            </div>
          </div>
          <div className="ml-auto pr-[43px] pt-[134px] text-[14px] leading-[20px] text-[#666] tracking-[0.025em]">© 2019 LONGHASH. All rights reserved.</div>
        </div>
      </footer>
    </div>
  );
}
